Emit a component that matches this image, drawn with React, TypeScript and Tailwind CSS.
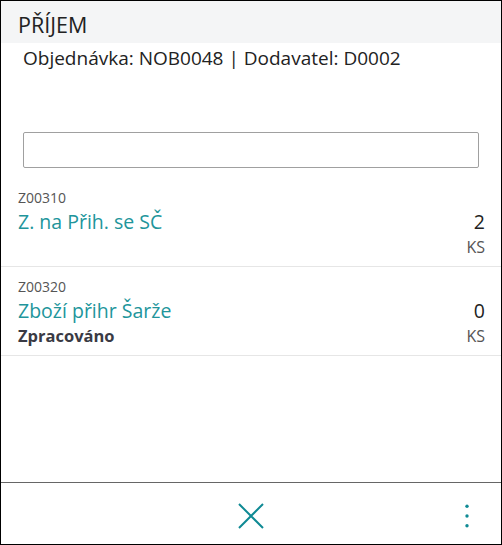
type Line = {
    code: string;
    name: string;
    qty: number;
    unit: string;
    status?: string;
};

const lines: Line[] = [
    { code: "Z00310", name: "Z. na Přih. se SČ", qty: 2, unit: "KS" },
    { code: "Z00320", name: "Zboží přihr Šarže", qty: 0, unit: "KS", status: "Zpracováno" },
];

const LineRow = ({ line }: { line: Line }) => (
    <div className="flex justify-between border-b border-[#e6e6e6] pl-[17px] pr-[16px] pt-[11px] pb-[7px]">
        <div className="flex flex-col">
            <span className="text-[14px] leading-[18px] text-[#555]">{line.code}</span>
            <span className="mt-[2px] text-[19.5px] leading-[26px] text-[#21959b]">{line.name}</span>
            {line.status ? (
                <span className="text-[16.5px] leading-[24px] font-bold text-[#3a3a44]">{line.status}</span>
            ) : (
                <span className="h-[24px]" />
            )}
        </div>
        <div className="flex flex-col items-end pt-[20px]">
            <span className="text-[19.5px] leading-[26px] text-[#222]">{line.qty}</span>
            <span className="text-[16px] leading-[24px] text-[#555]">{line.unit}</span>
        </div>
    </div>
);

export default function App() {
    return (
        <div
            className="flex h-[545px] w-[502px] flex-col border border-black bg-white text-[#222]"
            style={{ fontFamily: '"Open Sans", "Noto Sans", sans-serif' }}
        >
            <div className="h-[42px] bg-[#f4f5f6] px-[17px] pt-[10px] text-[21.5px] leading-[28px] text-[#222]">
                PŘÍJEM
            </div>
            <div className="px-[22px] pt-[2px] text-[19px] leading-[26px]">
                Objednávka: NOB0048 | Dodavatel: D0002
            </div>
            <div className="px-[22px] pt-[61px] pb-[10px]">
                <input
                    type="text"
                    className="h-[36px] w-full rounded-[2px] border border-[#a0a0a0] px-2 text-[16px] outline-none"
                />
            </div>
            <div className="flex-1">
                {lines.map((line) => (
                    <LineRow key={line.code} line={line} />
                ))}
            </div>
            <div className="grid h-[62px] grid-cols-[1fr_auto_1fr] items-center border-t border-[#666] pt-[4px]">
                <div />
                <button type="button" className="text-[#0f8a94]">
                    <svg width="26" height="26" viewBox="0 0 26 26" fill="none" stroke="currentColor" strokeWidth="2">
                        <path d="M1 1L25 25M25 1L1 25" />
                    </svg>
                </button>
                <div className="flex justify-end pr-[31px]">
                    <button type="button" className="text-[#0f8a94]">
                        <svg width="6" height="26" viewBox="0 0 6 26" fill="currentColor">
                            <circle cx="3" cy="3.3" r="1.7" />
                            <circle cx="3" cy="13" r="1.7" />
                            <circle cx="3" cy="22.7" r="1.7" />
                        </svg>
                    </button>
                </div>
            </div>
        </div>
    );
}
